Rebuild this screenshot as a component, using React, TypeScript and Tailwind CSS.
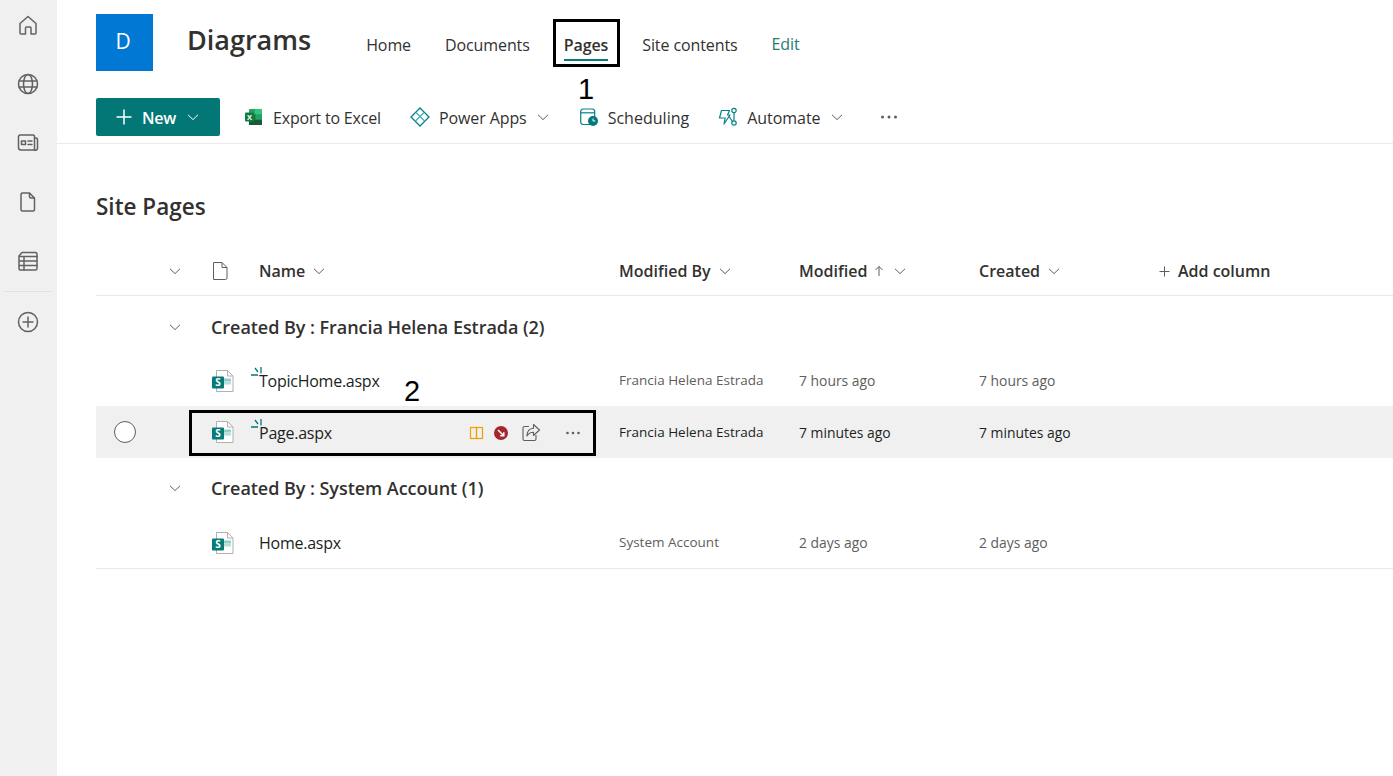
import React from "react";

const Chev = ({ c = "#605e5c", w = 12 }: { c?: string; w?: number }) => (
  <svg width={w} height={w} viewBox="0 0 12 12" fill="none" stroke={c} strokeWidth="1">
    <path d="M1 3.8 6 8.6 11 3.8" />
  </svg>
);

const SideIcon = ({ children }: { children: React.ReactNode }) => (
  <svg width="22" height="22" viewBox="0 0 22 22" fill="none" stroke="#616161" strokeWidth="1.500" strokeLinejoin="round" strokeLinecap="round">
    {children}
  </svg>
);

const SpFile = () => (
  <svg width="24" height="24" viewBox="0 0 24 24" className="shrink-0">
    <path d="M5.5 1.5h11l5.5 5.5v15.500h-16.500z" fill="#fff" stroke="#b3b0ad" strokeWidth="1" />
    <path d="M16.500 1.500v5.500H22" fill="none" stroke="#b3b0ad" />
    <rect x="13" y="9.500" width="7" height="3" fill="#8ed1cb" />
    <rect x="13" y="12.500" width="7" height="3" fill="#b4dfdb" />
    <rect x="1" y="7.500" width="12" height="12" rx="1" fill="#077b77" />
    <text x="7" y="17" textAnchor="middle" fontSize="10" fontWeight="700" fill="#fff" fontFamily="'Open Sans', sans-serif">S</text>
  </svg>
);

const Spark = () => (
  <svg width="13" height="12" viewBox="0 0 13 12" className="absolute left-[-8px] top-[-2px]" fill="none" stroke="#03787c" strokeWidth="1.300">
    <path d="M10 0v6.500M4 1l3 4M0 8h7" />
  </svg>
);

const headers = "font-semibold text-[#323130] text-[16px]";

const NameCell = ({ name, spark }: { name: string; spark?: boolean }) => (
  <span className="relative text-[16px] text-[#201f1e] tracking-[-0.250px]">
    {spark && <Spark />}
    {name}
  </span>
);

const Row = ({
  name,
  by,
  when,
  spark,
  selected,
}: {
  name: string;
  by: string;
  when: string;
  spark?: boolean;
  selected?: boolean;
}) => {
  const tone = selected ? "text-[#201f1e]" : "text-[#605e5c]";
  return (
    <div className={`grid h-[52px] grid-cols-[115px_44px_364px_180px_180px_1fr] items-center pt-[2px] ${selected ? "bg-[#f0f0f0]" : ""}`}>
      <div className="flex items-center pl-[18px]">
        {selected && <div className="mt-[-2px] h-[22px] w-[22px] rounded-full border border-[#605e5c] bg-white" />}
      </div>
      <div className={selected ? "mt-[-2px]" : ""}>
        <SpFile />
      </div>
      <div className="flex items-center pl-[4px] pr-[38px]">
        <NameCell name={name} spark={spark} />
        {selected && (
          <div className="ml-auto flex items-center">
            <svg width="16" height="14" viewBox="0 0 16 14" fill="none" stroke="#eaa300" strokeWidth="1.200">
              <rect x="1.500" y="1.500" width="6" height="11" />
              <rect x="7.500" y="1.500" width="6" height="11" />
            </svg>
            <svg width="16" height="16" viewBox="0 0 16 16" className="ml-[8px]">
              <circle cx="8" cy="8" r="7" fill="#a4262c" />
              <path d="M5 5 10.500 10.500M10.800 7.200v3.600H7.200" stroke="#fff" strokeWidth="1.500" fill="none" />
            </svg>
            <svg width="20" height="20" viewBox="0 0 20 20" fill="none" stroke="#605e5c" strokeWidth="1.100" className="ml-[12px]">
              <path d="M8 3.500H3.500a1.500 1.500 0 0 0-1.500 1.500v11a1.500 1.500 0 0 0 1.500 1.500h10a1.500 1.500 0 0 0 1.500-1.500V12" />
              <path d="M12.500 1.500 18.500 7l-6 5.500V9.300C9.500 9.300 7.500 10.500 6 13c0-4.500 2.500-7.500 6.500-7.800z" strokeLinejoin="round" />
            </svg>
            <svg width="16" height="4" viewBox="0 0 16 4" fill="#605e5c" className="ml-[24px]">
              <circle cx="2.500" cy="2" r="1.300" />
              <circle cx="8" cy="2" r="1.300" />
              <circle cx="13.500" cy="2" r="1.300" />
            </svg>
          </div>
        )}
      </div>
      <div className={`pb-[2px] text-[13.500px] ${tone}`}>{by}</div>
      <div className={`text-[13.900px] ${tone}`}>{when}</div>
      <div className={`text-[13.900px] ${tone}`}>{when}</div>
    </div>
  );
};

const Group = ({ title, cls }: { title: string; cls: string }) => (
  <div className={`flex items-center ${cls}`}>
    <div className="flex w-[115px] justify-center pl-[43px]">
      <Chev />
    </div>
    <span className="text-[18px] font-semibold text-[#323130] tracking-[-0.050px]">{title}</span>
  </div>
);

const Cmd = ({ icon, label, chev, cls }: { icon: React.ReactNode; label: string; chev?: boolean; cls: string }) => (
  <div className={`flex items-center ${cls}`}>
    {icon}
    <span className="pt-[1px] text-[16px] text-[#323130]">{label}</span>
    {chev && (
      <span className="ml-[10px]">
        <Chev />
      </span>
    )}
  </div>
);

export default function App() {
  return (
    <div className="relative flex h-[776px] w-[1393px] overflow-hidden bg-white font-['Open_Sans',sans-serif]">
      <aside className="flex w-[57px] shrink-0 flex-col items-center bg-[#f0f0f0] pr-[1px] pt-[14px]">
        <div className="h-[22px]">
          <SideIcon>
            <path d="M3 19V9.500L11 2.500l8 7V19a1 1 0 0 1-1 1h-4v-6a1 1 0 0 0-1-1H9.500a1 1 0 0 0-1 1v6H4a1 1 0 0 1-1-1z" />
          </SideIcon>
        </div>
        <div className="mt-[37px] h-[22px]">
          <SideIcon>
            <circle cx="11" cy="11" r="9.500" />
            <ellipse cx="11" cy="11" rx="4.500" ry="9.500" />
            <path d="M2 8h18M2 14h18" />
          </SideIcon>
        </div>
        <div className="mt-[37px] h-[22px]">
          <SideIcon>
            <path d="M3 4h13a1.500 1.500 0 0 1 1.500 1.500V19H4a2.500 2.500 0 0 1-2.500-2.500v-11A1.500 1.500 0 0 1 3 4z" transform="translate(0 -1)" />
            <path d="M17.500 6h1.500A1.500 1.500 0 0 1 20.500 7.500V16a2 2 0 0 1-3 2" />
            <rect x="4.500" y="9" width="4" height="3.500" />
            <path d="M11 9h4M11 12.500h4" />
          </SideIcon>
        </div>
        <div className="mt-[37px] h-[22px]">
          <SideIcon>
            <path d="M5.500 2h7l5 5v11.500a1.500 1.500 0 0 1-1.500 1.500H5.500A1.500 1.500 0 0 1 4 18.500v-15A1.500 1.500 0 0 1 5.500 2z" />
            <path d="M12.500 2.500v3a1.500 1.500 0 0 0 1.500 1.500h3" />
          </SideIcon>
        </div>
        <div className="mt-[37px] h-[22px]">
          <SideIcon>
            <path d="M5 2.500h13.500a1.500 1.500 0 0 1 1.500 1.500v14.500a1.500 1.500 0 0 1-1.500 1.500H4A1.500 1.500 0 0 1 2 18.500V6z" />
            <path d="M2.500 6.500H20M2.500 11H20M2.500 15.500H20M7 6.500V20" />
          </SideIcon>
        </div>
        <div className="mt-[19px] h-px w-[47px] bg-[#e1e1e1]" />
        <div className="mt-[19px] h-[22px]">
          <SideIcon>
            <circle cx="11" cy="11" r="9.500" />
            <path d="M11 6v10M6 11h10" />
          </SideIcon>
        </div>
      </aside>

      <main className="flex min-w-0 flex-1 flex-col">
        <header className="h-[144px] border-b border-[#ebebeb] pl-[39px] pt-[14px]">
          <div className="flex h-[57px] items-start">
            <div className="flex h-[57px] w-[57px] items-center justify-center bg-[#0078d4] pb-[1px] pr-[3px] text-[21px] text-white">D</div>
            <div className="ml-[34px] mt-[4px] text-[27px] font-semibold leading-[44px] text-[#323130]">Diagrams</div>
            <nav className="ml-[55px] mt-[19px] flex items-center gap-[34px] text-[16px] leading-[24px] text-[#323130] tracking-[-0.100px]">
              <span>Home</span>
              <span>Documents</span>
              <span className="relative font-semibold">
                Pages
                <span className="absolute bottom-[-4px] left-0 h-[2px] w-full bg-[#037c7c]" />
              </span>
              <span>Site contents</span>
              <span className="mt-[-2px] text-[#2a7a70]">Edit</span>
            </nav>
          </div>
          <div className="mt-[27px] flex h-[38px] items-center">
            <div className="flex h-[38px] w-[124px] items-center justify-center rounded-[2px] bg-[#037676] text-white">
              <svg width="16" height="16" viewBox="0 0 16 16" stroke="#fff" strokeWidth="1.500" className="ml-[-1px]">
                <path d="M8 0.500v15M0.500 8h15" />
              </svg>
              <span className="ml-[10px] mr-[11px] pt-[1px] text-[16px] font-semibold tracking-[-0.300px]">New</span>
              <Chev c="#fff" />
            </div>
            <Cmd
              cls="ml-[24px] tracking-[-0.170px]"
              label="Export to Excel"
              icon={
                <svg width="19" height="18" viewBox="0 0 19 18" className="mr-[10px]">
                  <rect x="5" y="1" width="13" height="16" rx="1" fill="#21a366" />
                  <rect x="11" y="1" width="7" height="5.300" fill="#33c481" />
                  <rect x="5" y="6.300" width="6.500" height="5.400" fill="#107c41" />
                  <rect x="5" y="11.700" width="13" height="5.300" fill="#185c37" />
                  <rect x="1" y="4.500" width="9" height="9" rx="1" fill="#107c41" />
                  <text x="5.500" y="11.800" textAnchor="middle" fontSize="7.500" fontWeight="700" fill="#fff" fontFamily="'Open Sans', sans-serif">X</text>
                </svg>
              }
            />
            <Cmd
              cls="ml-[29px] tracking-[-0.100px]"
              label="Power Apps"
              chev
              icon={
                <svg width="20" height="20" viewBox="0 0 20 20" fill="none" stroke="#038387" strokeWidth="1.300" className="mr-[9px]">
                  <path d="M10 1 19 10 10 19 1 10z" />
                  <path d="M6 5.500 14.500 14M14 5.500 5.500 14" stroke="#45b0b0" />
                </svg>
              }
            />
            <Cmd
              cls="ml-[30px] tracking-[0.020px]"
              label="Scheduling"
              icon={
                <svg width="20" height="20" viewBox="0 0 20 20" fill="none" className="mr-[9px]">
                  <rect x="1.700" y="2" width="14" height="15.500" rx="2.500" stroke="#038387" strokeWidth="1.200" />
                  <path d="M2 5.800h13.500" stroke="#038387" strokeWidth="1.200" />
                  <circle cx="14" cy="14" r="5" fill="#03787c" />
                  <path d="M14 11.500V14h2.300" stroke="#fff" strokeWidth="1" />
                </svg>
              }
            />
            <Cmd
              cls="ml-[29px] tracking-[-0.050px]"
              label="Automate"
              chev
              icon={
                <svg width="20" height="20" viewBox="0 0 20 20" fill="none" stroke="#038387" strokeWidth="1.200" className="mr-[9px]">
                  <path d="M3.500 3.500h8L9.500 8h2.500l-6 9 1.200-6H1.500z" strokeLinejoin="round" />
                  <circle cx="16" cy="3.500" r="2.200" />
                  <circle cx="16" cy="16" r="2.200" />
                  <path d="M16 5.700v8.100M11 9.500l3.500 5" />
                </svg>
              }
            />
            <svg width="18" height="4" viewBox="0 0 18 4" fill="#605e5c" className="ml-[37px]">
              <circle cx="2.500" cy="2" r="1.500" />
              <circle cx="9" cy="2" r="1.500" />
              <circle cx="15.500" cy="2" r="1.500" />
            </svg>
          </div>
        </header>

        <section className="pl-[39px]">
          <h1 className="mt-[45px] text-[22.500px] font-semibold leading-[36px] text-[#323130]">Site Pages</h1>

          <div className={`mt-[22px] grid h-[49px] grid-cols-[115px_48px_360px_180px_180px_180px_1fr] items-center border-b border-[#e8e8e8] ${headers}`}>
            <div className="flex justify-center pl-[43px]">
              <Chev />
            </div>
            <div className="ml-[-1px]">
              <svg width="20" height="20" viewBox="0 0 20 20" fill="none" stroke="#605e5c" strokeWidth="1">
                <path d="M3.500 1.500h8.500l5 5v10.500a1.500 1.500 0 0 1-1.500 1.500h-12z" />
                <path d="M12 1.500v5h5" />
              </svg>
            </div>
            <div className="flex items-center gap-[8px]">
              Name <Chev />
            </div>
            <div className="flex items-center gap-[8px]">
              Modified By <Chev />
            </div>
            <div className="flex items-center">
              Modified
              <svg width="12" height="12" viewBox="0 0 12 12" fill="none" stroke="#605e5c" strokeWidth="1" className="ml-[6px]">
                <path d="M6 11V1.500M2.500 5 6 1.500 9.500 5" />
              </svg>
              <span className="ml-[9px]">
                <Chev />
              </span>
            </div>
            <div className="flex items-center gap-[8px]">
              Created <Chev />
            </div>
            <div className="flex items-center">
              <svg width="11" height="11" viewBox="0 0 11 11" stroke="#605e5c" strokeWidth="1" className="mr-[8px]">
                <path d="M5.500 0.500v10M0.500 5.500h10" />
              </svg>
              Add column
            </div>
          </div>

          <Group title="Created By : Francia Helena Estrada (2)" cls="h-[62px]" />
          <div className="mt-[-4px]">
            <Row name="TopicHome.aspx" by="Francia Helena Estrada" when="7 hours ago" spark />
          </div>
          <Row name="Page.aspx" by="Francia Helena Estrada" when="7 minutes ago" spark selected />
          <Group title="Created By : System Account (1)" cls="h-[60px]" />
          <div className="mt-[-2px] border-b border-[#e8e8e8]">
            <Row name="Home.aspx" by="System Account" when="2 days ago" />
          </div>
        </section>
      </main>

      <div className="pointer-events-none absolute left-[553px] top-[19px] h-[48px] w-[67px] border-[3px] border-black" />
      <div className="absolute left-[578px] top-[71px] font-['Liberation_Sans',sans-serif] text-[29px] leading-[36px] text-black">1</div>
      <div className="pointer-events-none absolute left-[189px] top-[410px] h-[46px] w-[407px] border-[3px] border-black" />
      <div className="absolute left-[404px] top-[373px] font-['Liberation_Sans',sans-serif] text-[29px] leading-[36px] text-black">2</div>
    </div>
  );
}
